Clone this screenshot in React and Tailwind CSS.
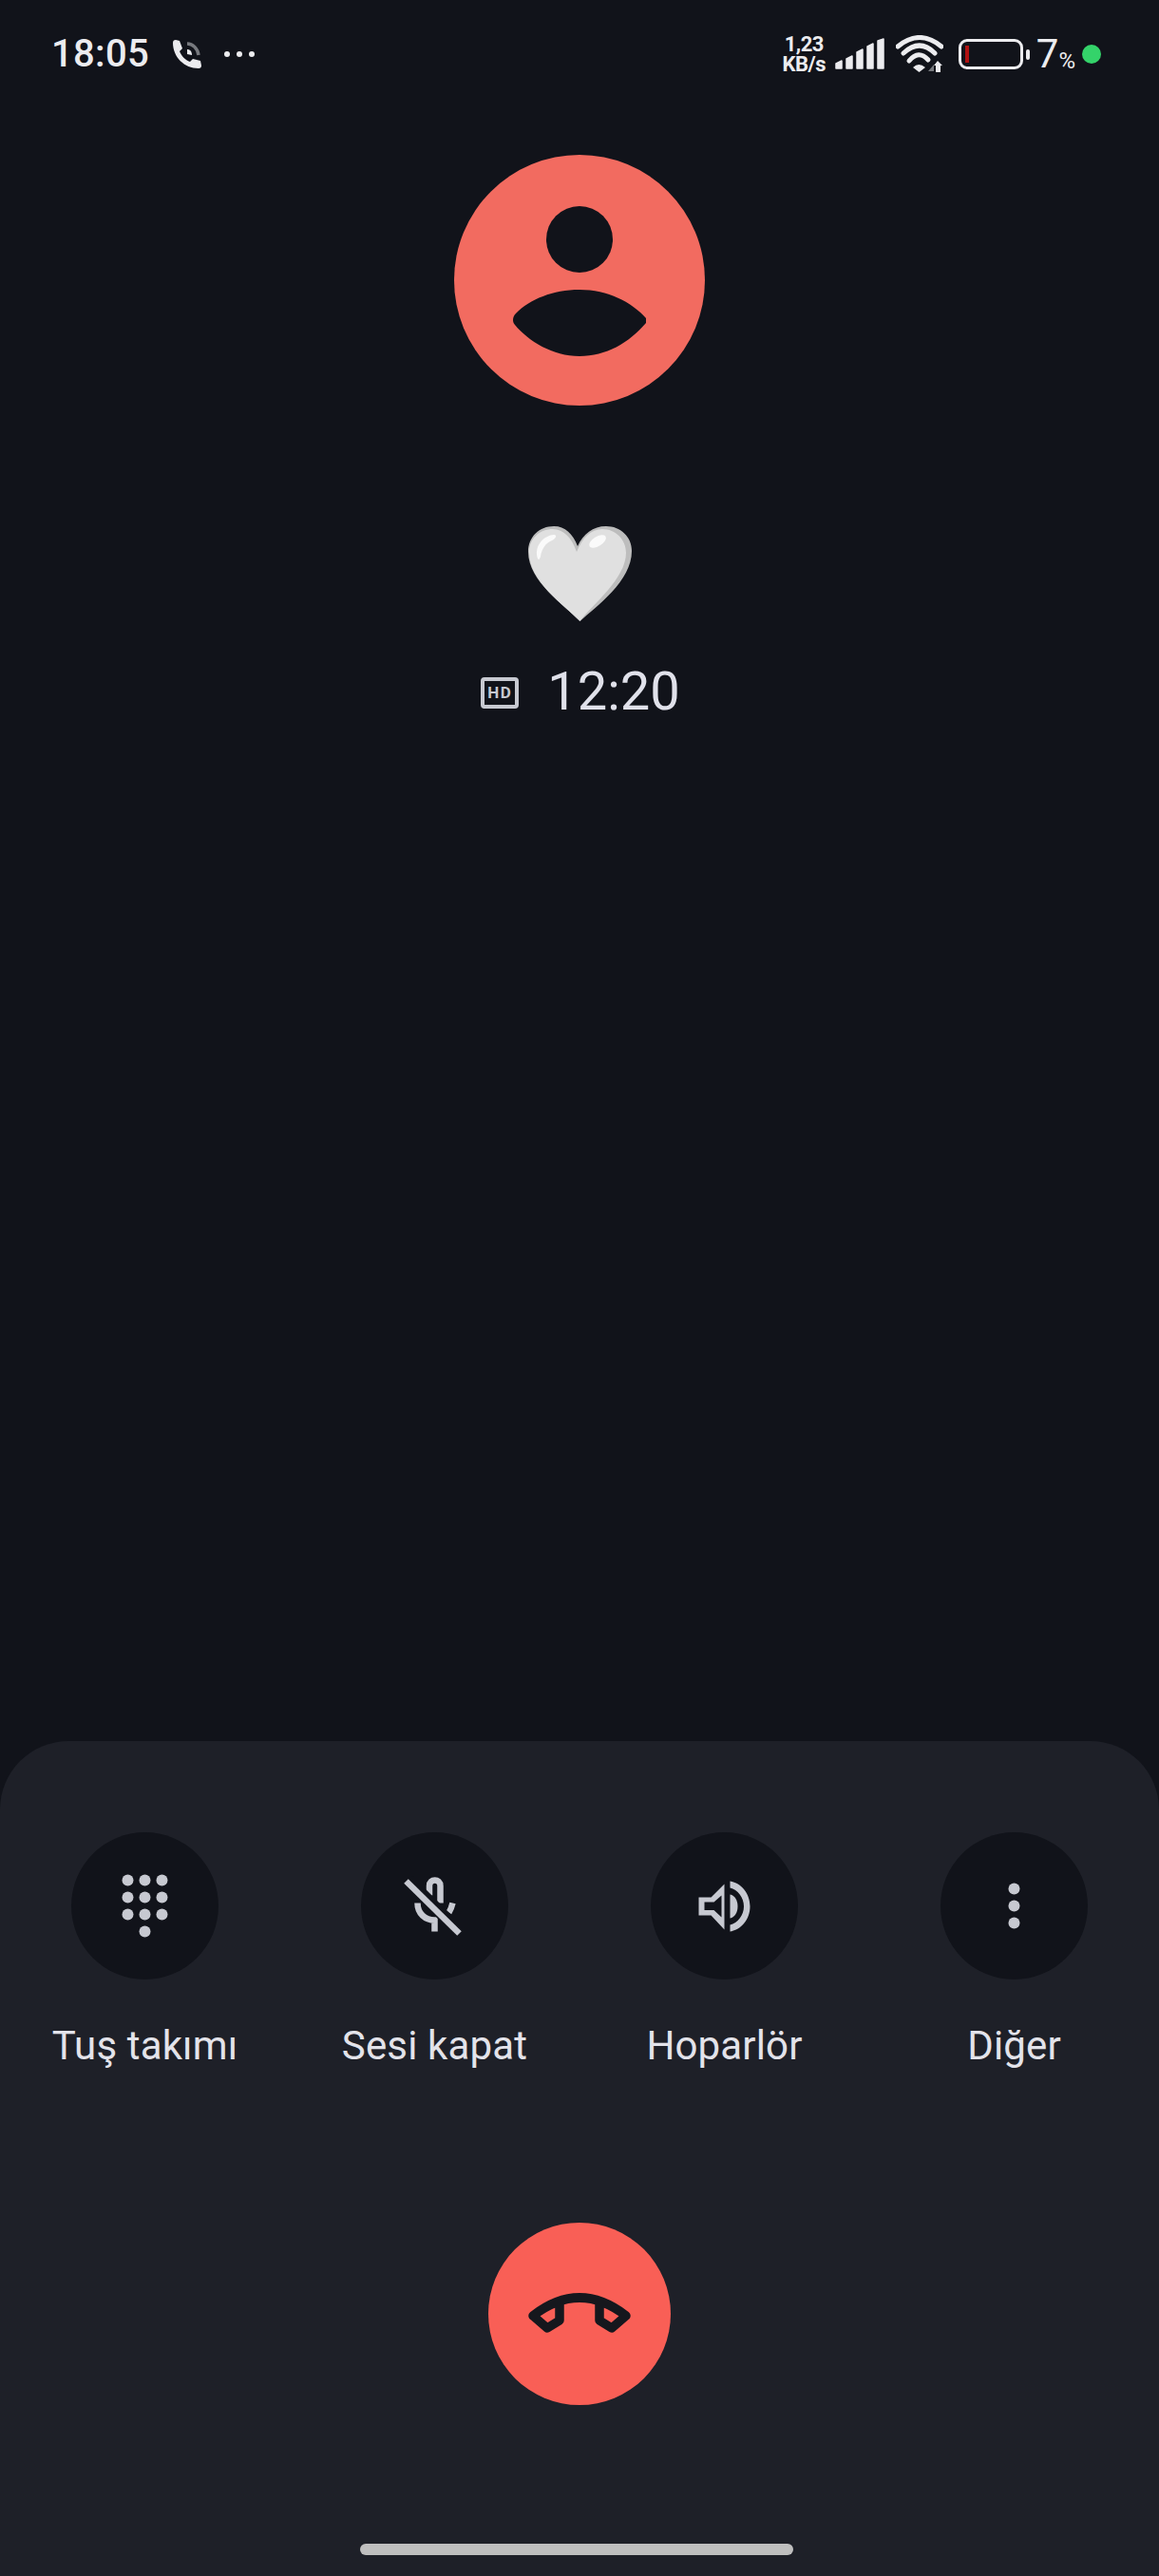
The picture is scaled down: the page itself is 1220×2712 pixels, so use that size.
import React from "react";

const ICON = "#c7c9d1";
const BG = "#11131a";

function Keypad() {
  const xs = [-18, 0, 18];
  const ys = [-27, -9, 9];
  return (
    <svg width="155" height="155" viewBox="-77.5 -77.5 155 155">
      {ys.map((y) => xs.map((x) => <circle key={`${x}${y}`} cx={x} cy={y} r="6" fill={ICON} />))}
      <circle cx="0" cy="27" r="6" fill={ICON} />
    </svg>
  );
}

function Mic() {
  return (
    <svg width="155" height="155" viewBox="-77.5 -77.5 155 155" fill="none">
      <path d="M-5.500 -11 V-21 C-5.500 -29 6 -29 6 -21 V-3" stroke={ICON} strokeWidth="6.500" />
      <path d="M-18 -3 C-18 8 -10 15 0 15 V27" stroke={ICON} strokeWidth="6.500" />
      <path d="M19 -3 C18 1 17 4 15 7" stroke={ICON} strokeWidth="6.500" />
      <path d="M-29 -25 L25 29" stroke="#11131a" strokeWidth="13" transform="translate(1 -2)" />
      <path d="M-30 -26 L26 29" stroke={ICON} strokeWidth="6.500" />
    </svg>
  );
}

function Speaker() {
  return (
    <svg width="155" height="155" viewBox="-77.5 -77.5 155 155" fill="none">
      <path d="M0 -23 V25 L-14 10 H-27 V-9 H-14 Z M-3 -11 L-11 -4 H-21 V4.500 H-11 L-3 12 Z" fill={ICON} fillRule="evenodd" />
      <path d="M6 -12 C11 -11 14 -6 14 0.500 C14 7 11 12 6 13 Z" fill={ICON} />
      <path d="M6 -26 C18 -24 27 -13 27 0.500 C27 14 18 25 6 27 V20 C14 18 20.500 10 20.500 0.500 C20.500 -9 14 -17 6 -19 Z" fill={ICON} />
    </svg>
  );
}

function More() {
  return (
    <svg width="155" height="155" viewBox="-77.5 -77.5 155 155">
      {[-18, 0, 18].map((y) => <circle key={y} cx="0" cy={y} r="6" fill={ICON} />)}
    </svg>
  );
}

function Action({ label, children }) {
  return (
    <div className="flex flex-col items-center">
      <div className="w-[155px] h-[155px] rounded-full bg-[#11131a] flex items-center justify-center">{children}</div>
      <div className="mt-[44px] text-[42px] leading-[52px] text-[#e3e3ea] font-normal tracking-[0.15px] whitespace-nowrap">{label}</div>
    </div>
  );
}

function Signal() {
  return (
    <svg width="52" height="34" viewBox="0 0 52 34" fill="#ececef" stroke="#ececef" strokeWidth="1.500" strokeLinejoin="round">
      <path d="M1 32 V27 L7 24 V32 Z" />
      <path d="M12 32 V22 L18 19 V32 Z" />
      <path d="M23 32 V15 L29 12 V32 Z" />
      <path d="M34 32 V9 L40 6 V32 Z" />
      <path d="M45 32 V3 L51 1 V32 Z" />
    </svg>
  );
}

function Wifi() {
  return (
    <svg width="50" height="40" viewBox="0 0 50 40" fill="none">
      <path d="M2 12 Q25 -7 48 12" stroke="#ececef" strokeWidth="5" strokeLinecap="round" />
      <path d="M8 19 Q25 3 41 19" stroke="#ececef" strokeWidth="5" strokeLinecap="round" />
      <path d="M14 27 Q24 15 34 26" stroke="#ececef" strokeWidth="5" strokeLinecap="round" />
      <path d="M18 34 Q24 28 31 34 L24.500 39 Z" fill="#ececef" />
      <path d="M34 38 L40 31 V38 Z" fill="#77797e" />
      <path d="M44 27 L49 32 H47 V39 H42 V32 H40 Z" fill="#ececef" />
    </svg>
  );
}

function CallIcon() {
  return (
    <svg width="30" height="30" viewBox="0 0 30 30" fill="none">
      <path d="M0 3 Q0 0 3 0 L7 1 L10 9 L7 12 C9 17 13 21 18 23 L21 20 L29 22 L30 27 Q30 30 27 30 C12 30 0 18 0 3 Z" fill="#ececef" />
      <path d="M15 4 C21 4 26 9 27 16" stroke="#77797e" strokeWidth="3.500" />
      <path d="M15 10 C18 10 20 12 20 16 L15 15 Z" fill="#ececef" />
    </svg>
  );
}

function Heart() {
  return (
    <svg width="109" height="100" viewBox="0 0 109 100" className="block">
      <path d="M54.500 100 C38 83 0 58 0 27 C0 11 12 0 27 0 C39 0 47 8 52 21 C58 8 68 0 82 0 C97 0 109 11 109 26 C109 58 72 84 54.500 100 Z" fill="#bdbdbd" />
      <path d="M54.500 100 C38 83 1 58 1 28 C1 13 12 3 26 3 C37 3 46 12 51 27 C57 12 66 3 78 3 C92 3 103 14 103 28 C103 55 68 82 54.500 100 Z" fill="#e0e0e0" />
      <path d="M10 34 C6 22 15 10 27 9 C31 9 29 13 25 15 C18 18 14 24 13 32 C12 35 11 36 10 34 Z" fill="#fafafa" />
      <ellipse cx="73" cy="16" rx="10" ry="5" transform="rotate(-32 73 16)" fill="#fafafa" />
    </svg>
  );
}

export default function App() {
  return (
    <div className="w-full h-[2712px] flex flex-col bg-[#11131a] overflow-hidden font-['Roboto',sans-serif]">
      {/* status bar */}
      <div className="h-[114px] shrink-0 flex items-center justify-between pl-[54px] pr-[61px] text-[#ececef]">
        <div className="flex items-center">
          <span className="text-[40px] leading-[48px] font-medium tracking-[0.3px]">18:05</span>
          <span className="ml-[25px] -mt-[1px]"><CallIcon /></span>
          <span className="ml-[24px] flex gap-[7px]">
            <i className="w-[6px] h-[6px] rounded-full bg-[#ececef]" />
            <i className="w-[6px] h-[6px] rounded-full bg-[#ececef]" />
            <i className="w-[6px] h-[6px] rounded-full bg-[#ececef]" />
          </span>
        </div>
        <div className="flex items-center">
          <div className="w-[43px] flex flex-col items-center text-[22px] leading-[21px] font-bold tracking-[-0.5px]">
            <span>1,23</span>
            <span>KB/s</span>
          </div>
          <span className="ml-[11px]"><Signal /></span>
          <span className="ml-[12px]"><Wifi /></span>
          <div className="ml-[16px] flex items-center">
            <div className="w-[68px] h-[32px] border-[3px] border-[#ececef] rounded-[9px] flex items-center pl-[4px]">
              <div className="w-[4px] h-[18px] bg-[#b01212]" />
            </div>
            <div className="ml-[3px] w-[4px] h-[11px] rounded-[2px] bg-[#ececef]" />
          </div>
          <span className="ml-[7px] text-[42px] leading-[48px] font-normal">7</span>
          <span className="text-[24px] leading-[24px] mt-[14px] font-normal">%</span>
          <div className="ml-[7px] w-[20px] h-[20px] rounded-full bg-[#34d36a]" />
        </div>
      </div>

      {/* avatar */}
      <div className="self-center mt-[49px] w-[264px] h-[264px] rounded-full bg-[#f26b60] shrink-0">
        <svg width="264" height="264" viewBox="0 0 264 264" className="block">
          <circle cx="132" cy="89" r="35" fill={BG} />
          <path d="M62 174 C62 171 63 169 65 167 C80 152 104 142 132 142 C162 142 187 155 202 172 V177 C184 198 160 212 132 212 C104 212 78 196 64 179 C63 178 62 176 62 174 Z" fill={BG} />
        </svg>
      </div>

      {/* name */}
      <div className="self-center mt-[127px] ml-[1px]"><Heart /></div>
      <div className="mt-[42px] flex items-center justify-center gap-[30px] ml-[2px]">
        <div className="w-[40px] h-[33px] mt-[2px] border-[4px] border-[#c7c9d1] rounded-[4px] flex items-center justify-center text-[17px] leading-none font-bold tracking-[1.500px] text-[#c7c9d1]">HD</div>
        <span className="text-[56px] leading-[64px] font-normal text-[#e0e1ea]">12:20</span>
      </div>

      {/* control panel */}
      <div className="mt-auto h-[879px] shrink-0 rounded-t-[72px] bg-[#1e2028] flex flex-col">
        <div className="grid grid-cols-4 pt-[96px]">
          <Action label="Tuş takımı"><Keypad /></Action>
          <Action label="Sesi kapat"><Mic /></Action>
          <Action label="Hoparlör"><Speaker /></Action>
          <Action label="Diğer"><More /></Action>
        </div>
        <div className="self-center mt-[160px] w-[192px] h-[192px] rounded-full bg-[#f95f56] flex items-center justify-center">
          <svg width="192" height="192" viewBox="-96 -96 192 192" fill="none">
            <path d="M-49 2 Q0 -36 49 2 L34 15 L21 7 L21 -12 M-21 -12 L-21 7 L-34 15 L-49 2" stroke="#15171d" strokeWidth="9.500" strokeLinejoin="round" strokeLinecap="round" />
          </svg>
        </div>
        <div className="ml-[379px] mt-[146px] w-[456px] h-[12px] rounded-full bg-[#bfbfbf]" />
      </div>
    </div>
  );
}
